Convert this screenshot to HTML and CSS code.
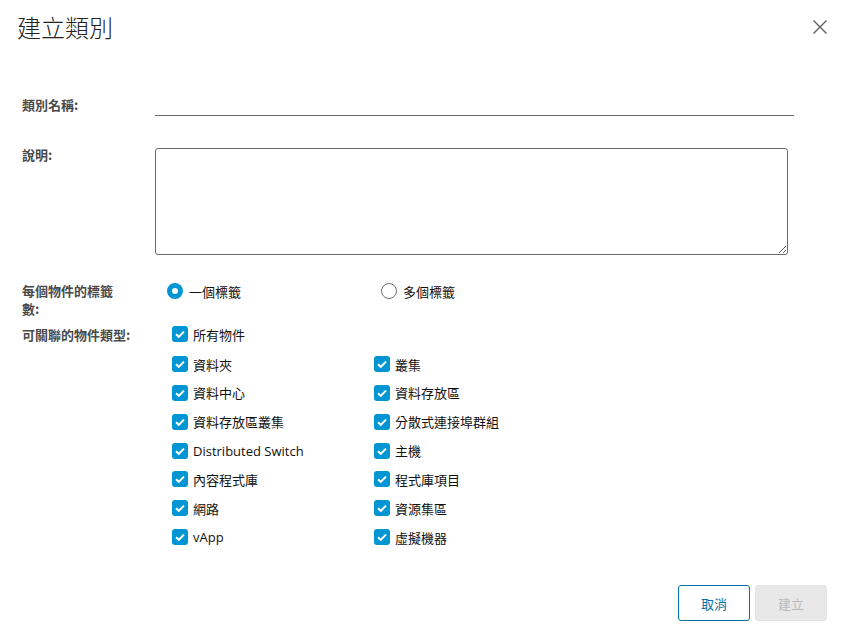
FILE: index.html
```html
<!DOCTYPE html>
<html lang="zh-Hant">
<head>
<meta charset="utf-8">
<title>建立類別</title>
<link rel="stylesheet" href="styles.css">
</head>
<body>
<div class="dialog">
  <div class="header">
    <h1 class="title">建立類別</h1>
    <button class="close" aria-label="關閉">
      <svg width="16" height="16" viewBox="0 0 16 16"><path d="M1.5 1.5 L14.5 14.5 M14.5 1.5 L1.5 14.5" stroke="#5d5d5d" stroke-width="1.4" fill="none"/></svg>
    </button>
  </div>
  <form class="form">
    <label class="label label-name">類別名稱:</label>
    <div class="field"><input class="text-input" type="text"></div>

    <label class="label label-desc">說明:</label>
    <div class="field"><textarea class="textarea"></textarea></div>

    <label class="label label-card">每個物件的標籤<br>數:</label>
    <div class="radios">
      <label class="radio"><span class="radio-mark checked"></span>一個標籤</label>
      <label class="radio"><span class="radio-mark"></span>多個標籤</label>
    </div>

    <label class="label label-types">可關聯的物件類型:</label>
    <div class="types">
      <label class="check all"><span class="box"><svg viewBox="0 0 16 16"><path d="M4 8.2 L6.8 10.8 L12 5.6" stroke="#fff" stroke-width="2" fill="none"/></svg></span>所有物件</label>
      <div class="grid">
        <label class="check"><span class="box"><svg viewBox="0 0 16 16"><path d="M4 8.2 L6.8 10.8 L12 5.6" stroke="#fff" stroke-width="2" fill="none"/></svg></span>資料夾</label>
        <label class="check"><span class="box"><svg viewBox="0 0 16 16"><path d="M4 8.2 L6.8 10.8 L12 5.6" stroke="#fff" stroke-width="2" fill="none"/></svg></span>叢集</label>
        <label class="check"><span class="box"><svg viewBox="0 0 16 16"><path d="M4 8.2 L6.8 10.8 L12 5.6" stroke="#fff" stroke-width="2" fill="none"/></svg></span>資料中心</label>
        <label class="check"><span class="box"><svg viewBox="0 0 16 16"><path d="M4 8.2 L6.8 10.8 L12 5.6" stroke="#fff" stroke-width="2" fill="none"/></svg></span>資料存放區</label>
        <label class="check"><span class="box"><svg viewBox="0 0 16 16"><path d="M4 8.2 L6.8 10.8 L12 5.6" stroke="#fff" stroke-width="2" fill="none"/></svg></span>資料存放區叢集</label>
        <label class="check"><span class="box"><svg viewBox="0 0 16 16"><path d="M4 8.2 L6.8 10.8 L12 5.6" stroke="#fff" stroke-width="2" fill="none"/></svg></span>分散式連接埠群組</label>
        <label class="check"><span class="box"><svg viewBox="0 0 16 16"><path d="M4 8.2 L6.8 10.8 L12 5.6" stroke="#fff" stroke-width="2" fill="none"/></svg></span>Distributed Switch</label>
        <label class="check"><span class="box"><svg viewBox="0 0 16 16"><path d="M4 8.2 L6.8 10.8 L12 5.6" stroke="#fff" stroke-width="2" fill="none"/></svg></span>主機</label>
        <label class="check"><span class="box"><svg viewBox="0 0 16 16"><path d="M4 8.2 L6.8 10.8 L12 5.6" stroke="#fff" stroke-width="2" fill="none"/></svg></span>內容程式庫</label>
        <label class="check"><span class="box"><svg viewBox="0 0 16 16"><path d="M4 8.2 L6.8 10.8 L12 5.6" stroke="#fff" stroke-width="2" fill="none"/></svg></span>程式庫項目</label>
        <label class="check"><span class="box"><svg viewBox="0 0 16 16"><path d="M4 8.2 L6.8 10.8 L12 5.6" stroke="#fff" stroke-width="2" fill="none"/></svg></span>網路</label>
        <label class="check"><span class="box"><svg viewBox="0 0 16 16"><path d="M4 8.2 L6.8 10.8 L12 5.6" stroke="#fff" stroke-width="2" fill="none"/></svg></span>資源集區</label>
        <label class="check"><span class="box"><svg viewBox="0 0 16 16"><path d="M4 8.2 L6.8 10.8 L12 5.6" stroke="#fff" stroke-width="2" fill="none"/></svg></span>vApp</label>
        <label class="check"><span class="box"><svg viewBox="0 0 16 16"><path d="M4 8.2 L6.8 10.8 L12 5.6" stroke="#fff" stroke-width="2" fill="none"/></svg></span>虛擬機器</label>
      </div>
    </div>
  </form>
  <div class="footer">
    <button class="btn btn-outline">取消</button>
    <button class="btn btn-disabled">建立</button>
  </div>
</div>
</body>
</html>
```
FILE: styles.css
```css
html, body {
  margin: 0;
  padding: 0;
  background: #fff;
}
body {
  font-family: "Open Sans", "Noto Sans CJK TC", sans-serif;
  font-size: 13px;
  color: #111;
}
.dialog {
  width: 847px;
  height: 634px;
  display: flex;
  flex-direction: column;
  box-sizing: border-box;
}
.header {
  display: flex;
  justify-content: space-between;
  align-items: flex-start;
  padding: 12px 19px 0 17px;
}
.title {
  margin: 0;
  font-family: "Noto Sans CJK TC", sans-serif;
  font-weight: 300;
  font-size: 24px;
  line-height: 30px;
  color: #222;
}
.close {
  border: 0;
  background: none;
  padding: 0;
  margin: 7px 0 0 0;
  width: 16px;
  height: 16px;
  display: block;
}
.close svg { display: block; }
.form {
  display: grid;
  grid-template-columns: 133px 1fr;
  padding: 0 0 0 22px;
  margin-top: 50px;
}
.label {
  font-family: "Noto Sans CJK TC", sans-serif;
  font-weight: 700;
  font-size: 13px;
  line-height: 18px;
  color: #4a4a4a;
}
.label-name { padding-top: 4px; }
.text-input {
  display: block;
  width: 639px;
  height: 24px;
  box-sizing: border-box;
  border: 0;
  border-bottom: 1px solid #6a6a6a;
  outline: none;
  padding: 0;
  margin: 0;
}
.label-desc { margin-top: 30px; }
.textarea {
  display: block;
  margin-top: 32px;
  width: 633px;
  height: 107px;
  box-sizing: border-box;
  border: 1px solid #6a6a6a;
  border-radius: 3px;
  padding: 4px;
  font: inherit;
}
.label-card { margin-top: 27px; }
.radios {
  margin-top: 27px;
  display: flex;
  height: 18px;
  align-items: center;
  padding-left: 12px;
}
.radio {
  display: flex;
  align-items: center;
  gap: 6px;
  width: 214px;
  font-family: "Noto Sans CJK TC", sans-serif;
  font-size: 13px;
  color: #111;
}
.radio-mark {
  width: 16px;
  height: 16px;
  border-radius: 50%;
  box-sizing: border-box;
  border: 1px solid #707070;
  background: #fff;
}
.radio-mark.checked {
  border: 5px solid #0095d3;
}
.label-types { margin-top: 8px; }
.types {
  margin-top: 8px;
  padding-left: 17px;
}
.check {
  display: flex;
  align-items: center;
  gap: 5px;
  height: 16px;
  font-size: 13px;
  color: #111;
}
.box {
  width: 16px;
  height: 16px;
  border-radius: 3px;
  background: #0095d3;
  flex: none;
}
.box svg { display: block; width: 16px; height: 16px; }
.grid {
  display: grid;
  grid-template-columns: 202px 200px;
  row-gap: 12.85px;
  margin-top: 14px;
}
.footer {
  margin-top: auto;
  display: flex;
  justify-content: flex-end;
  gap: 5px;
  padding: 0 20px 13px 0;
}
.btn {
  width: 72px;
  height: 36px;
  box-sizing: border-box;
  border-radius: 3px;
  font-family: "Noto Sans CJK TC", sans-serif;
  font-size: 13px;
  padding: 0;
}
.btn-outline {
  border: 1px solid #0072a3;
  background: #fff;
  color: #0072a3;
}
.btn-disabled {
  border: 1px solid #e4e4e4;
  background: #e8e8e8;
  color: #b8b8b8;
}
```
